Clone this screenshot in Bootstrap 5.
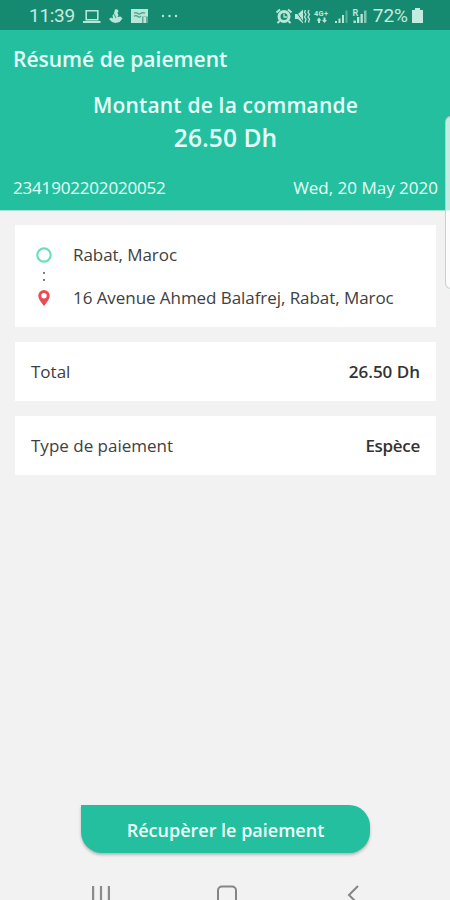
<!DOCTYPE html>
<html lang="fr">
<head>
<meta charset="utf-8">
<meta name="viewport" content="width=device-width, initial-scale=1">
<title>Résumé de paiement</title>
<link href="https://cdn.jsdelivr.net/npm/bootstrap@5.3.0/dist/css/bootstrap.min.css" rel="stylesheet">
<style>
  body { font-family: "Open Sans", "Noto Sans", sans-serif; background: #f2f2f2; color: #404040; }
  .screen { width: 450px; height: 900px; }
  .status { height: 30px; background: #168a70; color: #c4ebdf; font: 400 19px/30px Roboto, sans-serif; padding: 1px 27px 0 29px; }
  .status svg { display: block; }
  .clock { width: 46px; letter-spacing: -.3px; }
  .hero { height: 181px; background: #24bf9f; color: #e6fff8; border-bottom: 1px solid #a5e3d5; padding: 0 12px 0 13px; }
  .hero-title { font-size: 21px; font-weight: 600; line-height: 28px; margin: 15px 0 0; }
  .hero-label { font-size: 21px; font-weight: 600; line-height: 28px; margin-top: 18px; letter-spacing: .17px; }
  .hero-sum { font-size: 24.5px; font-weight: 600; line-height: 32px; margin-top: 3px; letter-spacing: .1px; }
  .hero-meta { font-size: 17px; line-height: 24px; margin-top: 22px; }
  .order-id { letter-spacing: -.18px; }
  .stack { padding: 14px 14px 0 15px; gap: 15px; }
  .panel { background: #fff; font-size: 17px; }
  .route { height: 102px; padding: 18px 21px; letter-spacing: -.06px; }
  .stop { height: 24px; line-height: 24px; gap: 21px; }
  .stop svg, .link-dots { width: 16px; flex: none; }
  .link-dots { height: 19px; }
  .line { height: 59px; padding: 0 16px; }
  .strong { font-weight: 600; color: #333; }
  .cash { letter-spacing: -.3px; }
  .cta { width: 289px; height: 48px; background: #24bf9f; color: #f0fffb; border: 0; border-radius: 0 21px 21px 21px; font-size: 18px; font-weight: 600; box-shadow: 0 2px 3px rgba(0,0,0,.25); padding: 2px 0 0; margin-bottom: 31px; }
  .edge { left: 445px; top: 116px; width: 12px; height: 173px; border-radius: 7px; background: rgba(255,255,255,.72); border: 1px solid rgba(170,180,180,.6); }
  .softkeys { height: 16px; padding: 0 90px 0 91px; }
  .softkeys svg { display: block; }
  .home-key { margin-right: 4px; }
</style>
<script src="https://cdn.jsdelivr.net/npm/bootstrap@5.3.0/dist/js/bootstrap.bundle.min.js"></script>
</head>
<body>
<div class="screen position-relative overflow-hidden d-flex flex-column">
  <div class="status d-flex align-items-center justify-content-between">
    <div class="d-flex align-items-center">
      <span class="clock">11:39</span>
      <svg width="110" height="20" viewBox="75 5 110 20" fill="#b8e6d8">
        <path d="M86.200 9.700h11.600v9H86.200z" fill="none" stroke="#b8e6d8" stroke-width="1.600"/><path d="M83 20h17.500v2H83z"/>
        <path d="M115 8.500q3-1 3.500 1.500l-1 2 1 2-1 2 3-.5 2 2-3 3.500-4 1-3.500-1-3-3 2-1.500 2 1-.5-3 1.500-2z"/>
        <path d="M114 13l2 4" stroke="#168a70" stroke-width=".8"/>
        <path d="M131 8h17v14h-17z"/>
        <path d="M134 12.300q2-1.500 3.500 0t3.500 0 4 0M134 15.300q2-1.500 3.500 0t3.500 0" stroke="#4f9e89" stroke-width="1.300" fill="none"/>
        <path d="M142 15.500h6V22h-6z" fill="#5fae99"/><path d="M143.500 16h2.500v6h-2.500z"/>
        <circle cx="163" cy="15" r="1.200"/><circle cx="169.500" cy="15" r="1.200"/><circle cx="176" cy="15" r="1.200"/>
      </svg>
    </div>
    <div class="d-flex align-items-center">
      <svg width="98" height="20" viewBox="276 5 98 20" fill="#b8e6d8">
        <circle cx="285" cy="15.500" r="5" fill="none" stroke="#b8e6d8" stroke-width="3"/>
        <path d="M277.500 11.500l3.500-3M292.500 11.500l-3.500-3M280.500 20l-2 2.200M289.500 20l2 2.200" stroke="#b8e6d8" stroke-width="2"/>
        <path d="M285 12.500v3.500h3" fill="none" stroke="#b8e6d8" stroke-width="1.300"/>
        <path d="M296 13h3l5-4.500v14L299 18h-3z"/><path d="M296 9l9 13" stroke="#168a70" stroke-width="1"/>
        <path d="M306.500 9l-1 2.300 1.500 2.300-1.500 2.300 1.500 2.300-1 3.300M310 9l-1 2.300 1.500 2.300-1.500 2.300 1.500 2.300-1 3.300" fill="none" stroke="#b8e6d8" stroke-width="1.300"/>
        <text x="315" y="15" font-family="Roboto, sans-serif" font-size="7.500" font-weight="700" textLength="14">4G+</text>
        <path d="M317.500 19.500l2.500-3 2.500 3h-1.500v2.500h-2v-2.500zM323 19l2.500 3 2.500-3h-1.500v-2.500h-2V19z"/>
        <path d="M336 20h2v2h-2zM339.500 17.500h2V22h-2z"/><path d="M343 14h2v8h-2z"/><path d="M346.500 9.500h2V22h-2z" opacity=".4"/>
        <text x="353.500" y="14.500" font-family="Roboto, sans-serif" font-size="9" font-weight="700">R</text>
        <path d="M354.500 19.500h2.300V22h-2.300zM358 16h2.300v6H358zM361.500 13h2.300v9h-2.300z"/><path d="M365 9.500h2.500V22H365z" opacity=".65"/>
      </svg>
      <span class="pct">72%</span>
      <svg class="ms-1" width="11" height="15" viewBox="0 0 11 15" fill="#c4ebdf"><path d="M3 0h5v2h3v13H0V2h3z"/></svg>
    </div>
  </div>
  <header class="hero">
    <h1 class="hero-title">Résumé de paiement</h1>
    <div class="hero-label text-center">Montant de la commande</div>
    <div class="hero-sum text-center">26.50 Dh</div>
    <div class="hero-meta d-flex justify-content-between"><span class="order-id">2341902202020052</span><span>Wed, 20 May 2020</span></div>
  </header>
  <main class="stack d-flex flex-column flex-grow-1">
    <section class="panel route">
      <div class="stop d-flex align-items-center">
        <svg height="16" viewBox="0 0 16 16"><circle cx="8" cy="8" r="6.700" fill="none" stroke="#66e0bf" stroke-width="2.200"/></svg>
        <span>Rabat, Maroc</span>
      </div>
      <svg class="link-dots d-block" viewBox="0 0 16 19" fill="#808080"><path d="M7 5h2v2H7zM7 12h2v2H7z"/></svg>
      <div class="stop d-flex align-items-center">
        <svg height="16" viewBox="0 0 16 16"><path fill="#e84c55" fill-rule="evenodd" d="M8 0a5.700 5.700 0 0 0-5.700 5.700C2.300 9.500 8 16 8 16s5.700-6.500 5.700-10.300A5.700 5.700 0 0 0 8 0zm0 3a2.700 2.700 0 1 1 0 5.400A2.700 2.700 0 0 1 8 3z"/></svg>
        <span>16 Avenue Ahmed Balafrej, Rabat, Maroc</span>
      </div>
    </section>
    <section class="panel line d-flex align-items-center justify-content-between"><span>Total</span><span class="strong">26.50 Dh</span></section>
    <section class="panel line d-flex align-items-center justify-content-between"><span>Type de paiement</span><span class="strong cash">Espèce</span></section>
    <button type="button" class="cta mt-auto mx-auto">Récupèrer le paiement</button>
  </main>
  <footer class="softkeys d-flex justify-content-between">
    <svg width="20" height="16" viewBox="0 0 20 16" fill="#8a8a8a"><path d="M1 2h2.200v14H1zM8.900 2h2.200v14H8.900zM16.800 2H19v14h-2.200z"/></svg>
    <svg class="home-key" width="22" height="16" viewBox="0 0 22 16" fill="none" stroke="#858585" stroke-width="2"><rect x="2" y="2.500" width="18" height="18" rx="4"/></svg>
    <svg width="14" height="16" viewBox="0 0 14 16" fill="none" stroke="#858585" stroke-width="2"><path d="M12 2L3 11l9 9"/></svg>
  </footer>
  <div class="edge position-absolute"></div>
</div>
</body>
</html>
